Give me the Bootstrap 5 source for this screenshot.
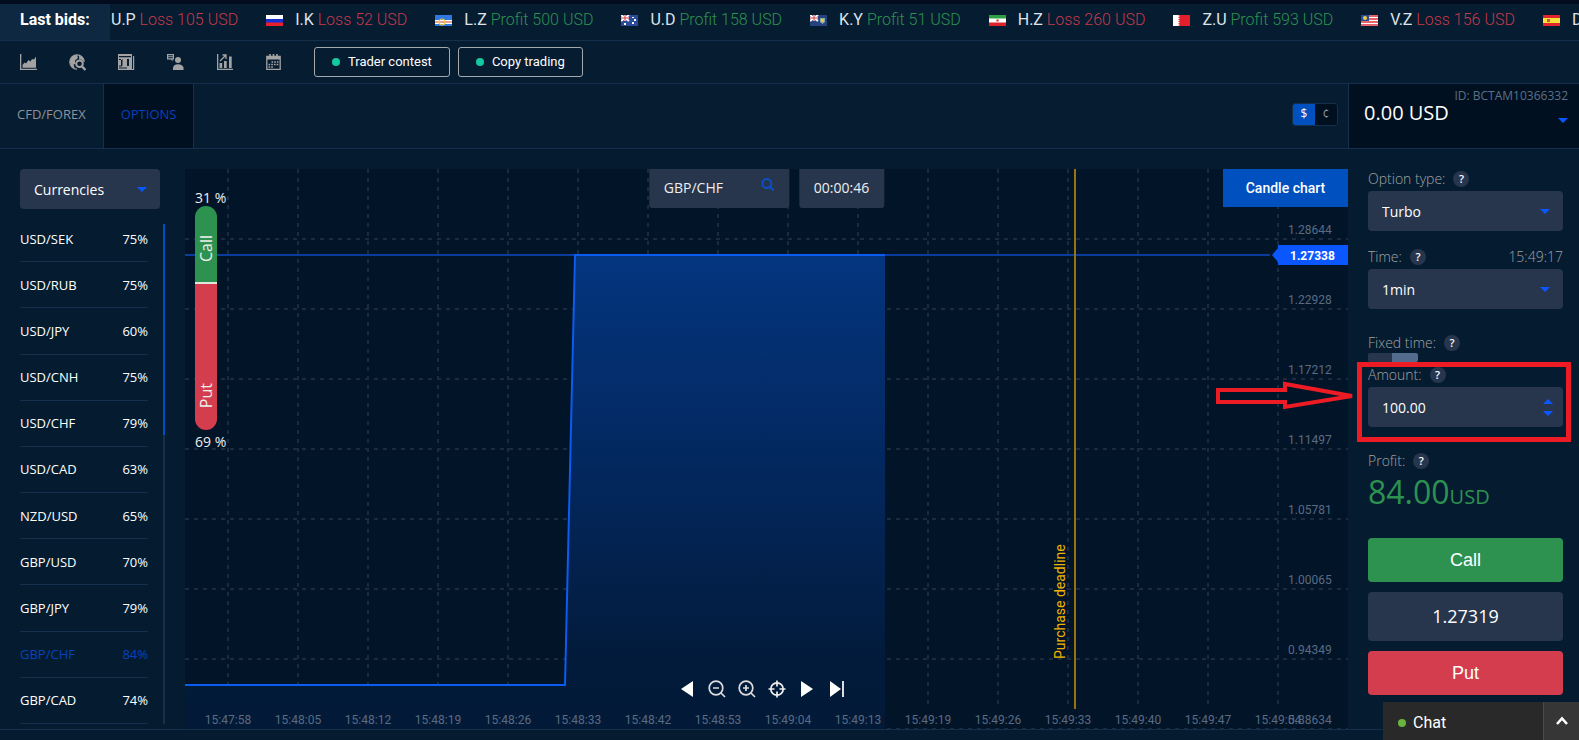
<!DOCTYPE html>
<html lang="en">
<head>
<meta charset="utf-8">
<meta name="viewport" content="width=device-width, initial-scale=1">
<title>Options trading</title>
<link href="https://cdn.jsdelivr.net/npm/bootstrap@5.3.0/dist/css/bootstrap.min.css" rel="stylesheet">
<style>
:root{--line:#14304a;--panel:#051c30;--field:#27364d;--deep:#021428;--blue:#0b57ff;--royal:#0050c0;--green:#2d9250;--red:#d33d4d;--dim:#a0a3a6}
body{background:var(--panel);color:#fff;font-family:"Open Sans","Liberation Sans",sans-serif;font-size:14px;line-height:20px;overflow-x:hidden}
.line-b{border-bottom:1px solid var(--line)}
.rb{font-family:Roboto,"Liberation Sans",sans-serif}
.lb{font-family:"Liberation Sans",sans-serif}
.topstrip{height:4px;background:#010c1e}
.ticker{height:37px;font-size:16px;background:#061c30}
.ticker-label{width:110px;padding-left:20px;padding-top:6px;background:#0f2841;font-weight:700;font-size:16px}
.bids{gap:28px;padding:6px 0 0 1px}
.bids b{font-weight:400;color:#dfe3e8}
.bids span{font-weight:300;white-space:nowrap}
.bids svg{width:17px;height:11px;margin-right:12px}
.loss{color:#c43a4c}.gain{color:#2d9250}
.tools{height:43px;padding-left:20px;background:#061c30}
.tools a{width:49px;color:#a3a3a3;line-height:0}
.pill{height:30px;padding:0 17px;border:1px solid #a5a9ae;border-radius:3px;color:#fff;background:none;font-size:13px;line-height:20px}
.pill i{width:8px;height:8px;border-radius:50%;background:#14c8a0;margin-right:8px}
.tabs{height:65px;background:#061c30}
.tabs a.tab{font-size:13px;font-weight:400;color:#8d949b;text-decoration:none;border-right:1px solid var(--line);padding:0 17px 5px}
.tabs a.tab.on{color:#0641be;background:#011020}
.cur{border:1px solid var(--line);border-radius:3px;background:#011020;width:46px;height:23px;margin-right:10px}
.cur button{border:0;padding:0;font-size:12px;line-height:20px;width:22px;background:none;color:#8d949b}
.cur .on{background:var(--royal);color:#fff}
.balance{width:231px;background:#011020;border-left:1px solid var(--line);padding:2px 11px 0 15px}
.balance .acct{font-size:12px;color:#5b7086;line-height:19px}
.balance .sum{font-size:20px;line-height:16px}
.balance svg{margin-top:-3px}
.side{width:185px;padding:20px 20px 0}
.side .form-select{width:140px}
.form-select,.fld{height:40px;border:0;border-radius:4px;background-color:var(--field);color:#fff;font-size:14px;padding:0 14px}
.form-select{background-image:url("data:image/svg+xml,%3Csvg xmlns='http://www.w3.org/2000/svg' viewBox='0 0 10 5'%3E%3Cpath fill='%230b57ff' d='M0 0h10L5 5z'/%3E%3C/svg%3E");background-size:10px 5px;background-position:right 13px center}
.pairlist{gap:15px;padding-top:7px}
.pairs{width:128px;font-size:13px;border-collapse:separate;border-spacing:0}
.pairs td{height:46px;padding:0;border-bottom:1px solid var(--line);vertical-align:middle;color:#fff}
.pairs td:last-child{text-align:right}
.pairs .on td{color:#0641be}
.sbar{width:2px;background:var(--line);height:500px;margin-top:8px}
.sbar div{width:2px;height:211px;background:var(--royal)}
.chart{margin-top:20px;min-height:560px;background:var(--deep)}
.plot text{font-family:Roboto,"Liberation Sans",sans-serif;font-size:12px;fill:#5a6b82}
.gauge{left:10px;top:20px;color:#eee}
.gauge .pct{font-size:14px;line-height:17px;white-space:nowrap}
.gauge .bar{width:22px;height:224px;border-radius:11px;overflow:hidden;font-size:16px;line-height:22px;margin-bottom:3px}
.gauge .bar span{writing-mode:vertical-rl;transform:rotate(180deg)}
.g-call{height:78px;background:var(--green);border-bottom:2px solid #dfe6dc;padding-top:29px}
.g-put{background:var(--red);flex:1;padding-bottom:22px}
.chip{height:39px;background:var(--field);border-radius:0 0 3px 3px;padding:9px 15px;color:#eee}
.search{width:140px}
.candle{background:var(--royal);color:#fff;border:0;width:125px;height:38px;font-size:14px;font-weight:500;padding-bottom:2px}
.nav-tools{bottom:30px;padding-right:10px}
.nav-tools button{width:30px;height:20px;border:0;background:none;padding:0;color:#fff;line-height:0}
.order{width:231px;padding:20px 16px 0 20px;font-size:14px}
.order label,.cap{color:var(--dim);font-weight:300;line-height:20px}
.headrow{margin-bottom:2px}
.t-time{padding-top:16px}
.t-more{padding-top:24px}
.q{width:16px;height:16px;border-radius:50%;background:var(--field);color:#fff;font-size:11px;line-height:16px;font-weight:600;text-align:center;margin-left:8px;padding:0;border:0}
.sw{appearance:none;width:50px;height:9px;border-radius:2px;background:linear-gradient(90deg,var(--field) 48%,#536c8e 48%);display:block;margin:0 0 3px}
.frame{border:5px solid #ed1c24;left:-11px;right:-8px;top:-3px;bottom:-15px;pointer-events:none}
.pointer{left:-154px;top:15px;pointer-events:none}
.big{font-size:32px;line-height:38px;color:var(--green);font-weight:500;margin-bottom:22px}
.big small{font-size:20px;font-weight:500}
.act{border:0;border-radius:4px;color:#fff;height:44px;font-size:18px}
.rate{height:49px;border-radius:4px;background:var(--field);font-size:18px;line-height:49px;margin:10px 0}
.chat{right:0;bottom:0;width:196px;height:38px;background:#292929;font-size:16px}
.chat i{width:8px;height:8px;border-radius:50%;background:#6ab33e;margin:1px 7px 0 15px}
.chat .who{padding-top:3px}
.chat button{width:36px;border:0;border-left:1px solid #4a4a4a;background:#363636;padding:0;line-height:0}
.bottom{height:11px;border-top:1px solid var(--line)}
</style>
</head>
<body class="d-flex flex-column min-vh-100">
<svg width="0" height="0" class="position-absolute">
  <symbol id="f-ru" viewBox="0 0 17 11"><path fill="#fff" d="M0 0h17v4H0z"/><path fill="#1a2fd0" d="M0 4h17v4H0z"/><path fill="#e8202a" d="M0 7.500h17V11H0z"/></symbol>
  <symbol id="f-cv" viewBox="0 0 17 11"><path fill="#2f78e0" d="M0 0h17v11H0z"/><path fill="#fff" d="M0 5h17v4H0z"/><path fill="#d6402b" d="M0 6.500h17v1H0z"/><circle cx="7" cy="7" r="3" fill="none" stroke="#f0c948" stroke-width="1.200"/></symbol>
  <symbol id="f-au" viewBox="0 0 17 11"><path fill="#2a4a9a" d="M0 0h17v11H0z"/><path stroke="#fff" stroke-width="2" d="m0 0 8 6M8 0 0 6M4 0v6M0 3h8"/><path stroke="#d9303c" d="M4 0v6M0 3h8"/><path fill="#fff" d="M3 8h2v2H3zM11 2h2v1h-2zM13 4h2v2h-2zM11 7h2v2h-2z"/></symbol>
  <symbol id="f-ky" viewBox="0 0 17 11"><path fill="#26427f" d="M0 0h17v11H0z"/><path stroke="#fff" stroke-width="2" d="m0 0 8 6M8 0 0 6M4 0v6M0 3h8"/><path stroke="#d9303c" d="M4 0v6M0 3h8"/><path fill="#8aa" d="M10 3h5v4l-2.500 2L10 7z"/><path fill="#e8c63a" d="M11 4h3v3h-3z"/></symbol>
  <symbol id="f-ir" viewBox="0 0 17 11"><path fill="#fff" d="M0 0h17v11H0z"/><path fill="#2ea043" d="M0 0h17v3.500H0z"/><path fill="#e0202a" d="M0 7.500h17V11H0z"/><circle cx="8.500" cy="5.500" r="1.300" fill="#e05050"/></symbol>
  <symbol id="f-bh" viewBox="0 0 17 11"><path fill="#e2202c" d="M0 0h17v11H0z"/><path fill="#fff" d="M0 0h5l2 1.100-2 1.100 2 1.100-2 1.100 2 1.100-2 1.100 2 1.100-2 1.100 2 1.100L5 11H0z"/></symbol>
  <symbol id="f-my" viewBox="0 0 17 11"><path fill="#fff" d="M0 0h17v11H0z"/><path stroke="#e0303a" stroke-width="1.500" d="M0 1h17M0 4h17M0 7h17M0 10h17"/><path fill="#2a4a9a" d="M0 0h8v6H0z"/><circle cx="4" cy="3" r="2" fill="#f0cc3a"/></symbol>
  <symbol id="f-es" viewBox="0 0 17 11"><path fill="#e0252c" d="M0 0h17v11H0z"/><path fill="#fbe03a" d="M0 3h17v5H0z"/><path fill="#c9564a" d="M4 4h3v3H4z"/></symbol>
</svg>
<div class="topstrip"></div>
<div class="ticker rb line-b d-flex overflow-hidden">
  <div class="ticker-label flex-shrink-0">Last bids:</div>
  <div class="bids d-flex align-items-start" id="bids"></div>
</div>
<nav class="tools line-b d-flex align-items-center" aria-label="Tools">
  <a href="#" aria-label="Charts"><svg width="17" height="17" viewBox="0 0 17 17" fill="currentColor"><path d="M0 0h1.300v14.800H17V16H0zM2.500 13.800V11l2-2.500 1.500 1L8.500 6l2 1.500L12 5l2 .5L16 2.500v11.300z"/></svg></a>
  <a href="#" aria-label="Market search"><svg width="17" height="17" viewBox="0 0 17 17"><path fill="none" stroke="currentColor" stroke-width="1.200" d="M15.200 8A7.200 7.200 0 1 0 8 15.200"/><path fill="currentColor" d="M3 2.500 8 .8 9 4 6 6.500 6.500 10l-2 .5L6 15 2.500 12.500.8 8zM10 1l4 3 1.200 4-3-2.500-2 0z"/><circle cx="10.500" cy="9.800" r="3.300" fill="#061b2f" stroke="currentColor" stroke-width="2"/><path stroke="currentColor" stroke-width="2.400" d="m13 12.500 3.500 3.500"/></svg></a>
  <a href="#" aria-label="News"><svg width="17" height="17" viewBox="0 0 17 17" fill="currentColor"><path fill-rule="evenodd" d="M0 0h14v16H0zM1 2v1.200h12V2zM1 5h3v1H1zm0 6.500h3v1H1zM3 5h1.500v6.500H3zm6 0h2v7H9zM1 13.500h8v1H1z"/><path d="M15 2h1.200v14H3v-1h12z"/></svg></a>
  <a href="#" aria-label="Consulting"><svg width="17" height="17" viewBox="0 0 17 17" fill="currentColor"><path d="M0 0h7v5.500H5.500V7.500L4 5.500H0zm1.200 1.200v1h4.600v-1zm0 2v1h4.600v-1z" fill-rule="evenodd"/><circle cx="11" cy="6" r="3"/><path d="M6 16v-2.500Q7 10.300 11 10.300T16.500 13.500V16z"/></svg></a>
  <a href="#" aria-label="Statistics"><svg width="17" height="17" viewBox="-1 0 17 17" fill="currentColor"><path d="M0 0h1.300v14.800H16V16H0zM2.500 9h2.700v5H2.500zM7 7h2.700v7H7zM12 2.500h2.700V14H12z"/><path d="m3 7 5.500-5.500M5.500 1H9v4" fill="none" stroke="currentColor" stroke-width="1.300"/></svg></a>
  <a href="#" aria-label="Calendar"><svg width="17" height="17" viewBox="-1 0 17 17" fill="none" stroke="currentColor"><path d="M.8 2.500h13.400v12.800H.8z" stroke-width="1.300"/><path d="M1 4h13" stroke-width="3"/><path d="M4 0v4M11 0v4M7.500 0v3" stroke-width="1.600"/><path d="M5.500 8h7M2.500 10.500h10M2.500 13h5" stroke-width="1.500" stroke-dasharray="1.700 1"/></svg></a>
  <button class="pill rb d-flex align-items-center me-2"><i></i>Trader contest</button>
  <button class="pill rb d-flex align-items-center"><i></i>Copy trading</button>
</nav>
<div class="tabs line-b d-flex">
  <a href="#" class="tab d-flex align-items-center">CFD/FOREX</a>
  <a href="#" class="tab on d-flex align-items-center">OPTIONS</a>
  <div class="ms-auto d-flex align-items-center pb-1">
    <div class="cur d-flex overflow-hidden"><button class="on">$</button><button>¢</button></div>
  </div>
  <div class="balance">
    <div class="acct text-end">ID: BCTAM10366332</div>
    <div class="sum">0.00 USD</div>
    <svg class="d-block ms-auto" width="10" height="5" viewBox="0 0 10 5"><path fill="#0b57ff" d="M0 0h10L5 5z"/></svg>
  </div>
</div>
<main class="d-flex flex-grow-1">
  <aside class="side flex-shrink-0">
    <select class="form-select" aria-label="Asset group"><option>Currencies</option></select>
    <div class="pairlist d-flex">
      <table class="pairs flex-shrink-0"><tbody id="pairs"></tbody></table>
      <div class="sbar"><div></div></div>
    </div>
  </aside>
  <section class="chart position-relative flex-grow-1 overflow-hidden" aria-label="Price chart">
    <svg class="plot position-absolute w-100 h-100" viewBox="0 0 1163 560" preserveAspectRatio="xMinYMin slice">
      <defs><linearGradient id="fill" x1="0" y1="86" x2="0" y2="560" gradientUnits="userSpaceOnUse"><stop offset="0" stop-color="#04357f"/><stop offset=".5" stop-color="#03265a"/><stop offset=".85" stop-color="#021b3b"/><stop offset="1" stop-color="#021a37"/></linearGradient></defs>
      <g id="grid" stroke="#1a2a40" stroke-width="2" stroke-dasharray="4 5"></g>
      <path fill="url(#fill)" d="M0 516H381L390 86H700V560H0z"/>
      <path stroke="#0a3c9c" stroke-width="2" d="M0 86h1085"/>
      <path fill="none" stroke="#0b5cf0" stroke-width="2" d="M0 516H380L390 86H700"/>
      <path stroke="#987314" stroke-width="2" d="M890 0v540"/>
      <text transform="translate(880 490) rotate(-90)" style="fill:#f0b400;font-size:14px">Purchase deadline</text>
      <g id="axis"></g>
      <path fill="#0b57ff" d="M1087 86l6-7v-3h70v20h-70v-3z"/>
      <text x="1105" y="91" style="fill:#fff;font-size:12px;font-weight:700">1.27338</text>
    </svg>
    <div class="gauge position-absolute">
      <div class="pct">31 %</div>
      <div class="bar d-flex flex-column">
        <div class="g-call"><span>Call</span></div>
        <div class="g-put d-flex align-items-end"><span>Put</span></div>
      </div>
      <div class="pct">69 %</div>
    </div>
    <div class="position-absolute top-0 start-50 translate-middle-x d-flex" style="gap:10px">
      <div class="chip search d-flex justify-content-between">GBP/CHF<svg width="13" height="13" viewBox="0 0 13 13" fill="none" stroke="#0a50d0" stroke-width="1.800"><circle cx="5.500" cy="5.500" r="4.500"/><path d="m9 9 3.500 3.500"/></svg></div>
      <div class="chip">00:00:46</div>
    </div>
    <button class="candle rb position-absolute top-0 end-0">Candle chart</button>
    <div class="nav-tools position-absolute start-50 translate-middle-x d-flex">
      <button aria-label="Back"><svg width="18" height="18" viewBox="0 0 18 18"><path fill="#fff" d="M15 1v16L3 9z"/></svg></button>
      <button aria-label="Zoom out"><svg width="18" height="18" viewBox="0 0 18 18" fill="none" stroke="#ddd" stroke-width="1.700"><circle cx="8" cy="8" r="6.800"/><path d="m13 13 4 4M5 8h6"/></svg></button>
      <button aria-label="Zoom in"><svg width="18" height="18" viewBox="0 0 18 18" fill="none" stroke="#ddd" stroke-width="1.700"><circle cx="8" cy="8" r="6.800"/><path d="m13 13 4 4M5 8h6M8 5v6"/></svg></button>
      <button aria-label="Center"><svg width="18" height="18" viewBox="0 0 18 18" fill="none" stroke="#eee" stroke-width="1.700"><circle cx="9" cy="9" r="6.200"/><path d="M9 .5v6M9 11.500v6M.5 9h6M11.500 9h6"/></svg></button>
      <button aria-label="Forward"><svg width="18" height="18" viewBox="0 0 18 18"><path fill="#fff" d="M3 1v16l12-8z"/></svg></button>
      <button aria-label="To end"><svg width="18" height="18" viewBox="0 0 18 18"><path fill="#fff" d="M2 1v16l11-8z"/><path stroke="#ddd" stroke-width="2" d="M15 1v16"/></svg></button>
    </div>
  </section>
  <aside class="order flex-shrink-0">
    <div class="headrow d-flex align-items-center"><label for="otype">Option type:</label><button class="q">?</button></div>
    <select id="otype" class="form-select"><option>Turbo</option></select>
    <div class="headrow t-time d-flex align-items-center"><label for="otime">Time:</label><button class="q">?</button><span class="cap ms-auto">15:49:17</span></div>
    <select id="otime" class="form-select"><option>1min</option></select>
    <div class="t-more d-flex align-items-center"><label for="fixed">Fixed time:</label><button class="q">?</button></div>
    <input id="fixed" type="checkbox" class="sw" checked>
    <div class="position-relative">
      <div class="headrow d-flex align-items-center"><label for="amount">Amount:</label><button class="q">?</button></div>
      <input id="amount" class="fld w-100 d-block" value="100.00">
      <svg class="position-absolute bottom-0 end-0 mb-2 me-2" width="14" height="22" viewBox="0 0 14 22" fill="#0b57ff"><path d="M2 7h10L7 2zM2 14h10l-5 5z"/></svg>
      <div class="frame position-absolute"></div>
      <svg class="pointer position-absolute" width="142" height="32" viewBox="0 0 142 32" fill="none" stroke="#ed1c24" stroke-width="4"><path d="M4 10H71V4L138 16 71 27V22H4z"/></svg>
    </div>
    <div class="headrow t-more d-flex align-items-center"><span class="cap">Profit:</span><button class="q">?</button></div>
    <div class="big">84.00<small>USD</small></div>
    <button class="act lb w-100 d-block" style="background:var(--green)">Call</button>
    <div class="rate text-center">1.27319</div>
    <button class="act lb w-100 d-block" style="background:var(--red)">Put</button>
  </aside>
</main>
<div class="bottom"></div>
<div class="chat rb position-fixed d-flex">
  <div class="who d-flex align-items-center flex-grow-1"><i></i>Chat</div>
  <button aria-label="Open chat"><svg width="14" height="10" viewBox="0 0 14 10" fill="none" stroke="#fff" stroke-width="2.600"><path d="m2 8 5-5.500L12 8"/></svg></button>
</div>
<script src="https://cdn.jsdelivr.net/npm/bootstrap@5.3.0/dist/js/bootstrap.bundle.min.js"></script>
<script>
const bids=[["","U.P","Loss 105"],["ru","I.K","Loss 52"],["cv","L.Z","Profit 500"],["au","U.D","Profit 158"],["ky","K.Y","Profit 51"],["ir","H.Z","Loss 260"],["bh","Z.U","Profit 593"],["my","V.Z","Loss 156"],["es","D.M","Profit 75"]];
document.getElementById("bids").innerHTML=bids.map(([f,n,r])=>`<span>${f?`<svg><use href="#f-${f}"/></svg>`:""}<b>${n}</b> <span class="${r[0]=="L"?"loss":"gain"}">${r} USD</span></span>`).join("");
const pairs=[["USD/SEK",75],["USD/RUB",75],["USD/JPY",60],["USD/CNH",75],["USD/CHF",79],["USD/CAD",63],["NZD/USD",65],["GBP/USD",70],["GBP/JPY",79],["GBP/CHF",84],["GBP/CAD",74]];
document.getElementById("pairs").innerHTML=pairs.map(([n,p])=>`<tr class="${n=="GBP/CHF"?"on":""}"><td>${n}</td><td>${p}%</td></tr>`).join("");
const times=["47:58","48:05","48:12","48:19","48:26","48:33","48:42","48:53","49:04","49:13","49:19","49:26","49:33","49:40","49:47","49:54"];
const prices=["1.28644","1.22928","1.17212","1.11497","1.05781","1.00065","0.94349","0.88634"];
let g="",a="";
times.forEach((t,i)=>{const x=43+70*i;g+=`<path d="M${x} 0V535"/>`;a+=`<text x="${x}" y="555" text-anchor="middle">15:${t}</text>`});
prices.forEach((p,i)=>{const y=70+70*i;g+=`<path d="M0 ${y}H1163"/>`;a+=`<text x="1103" y="${y-5}">${p}</text>`});
document.getElementById("grid").innerHTML=g;
document.getElementById("axis").innerHTML=a;
</script>
</body>
</html>
